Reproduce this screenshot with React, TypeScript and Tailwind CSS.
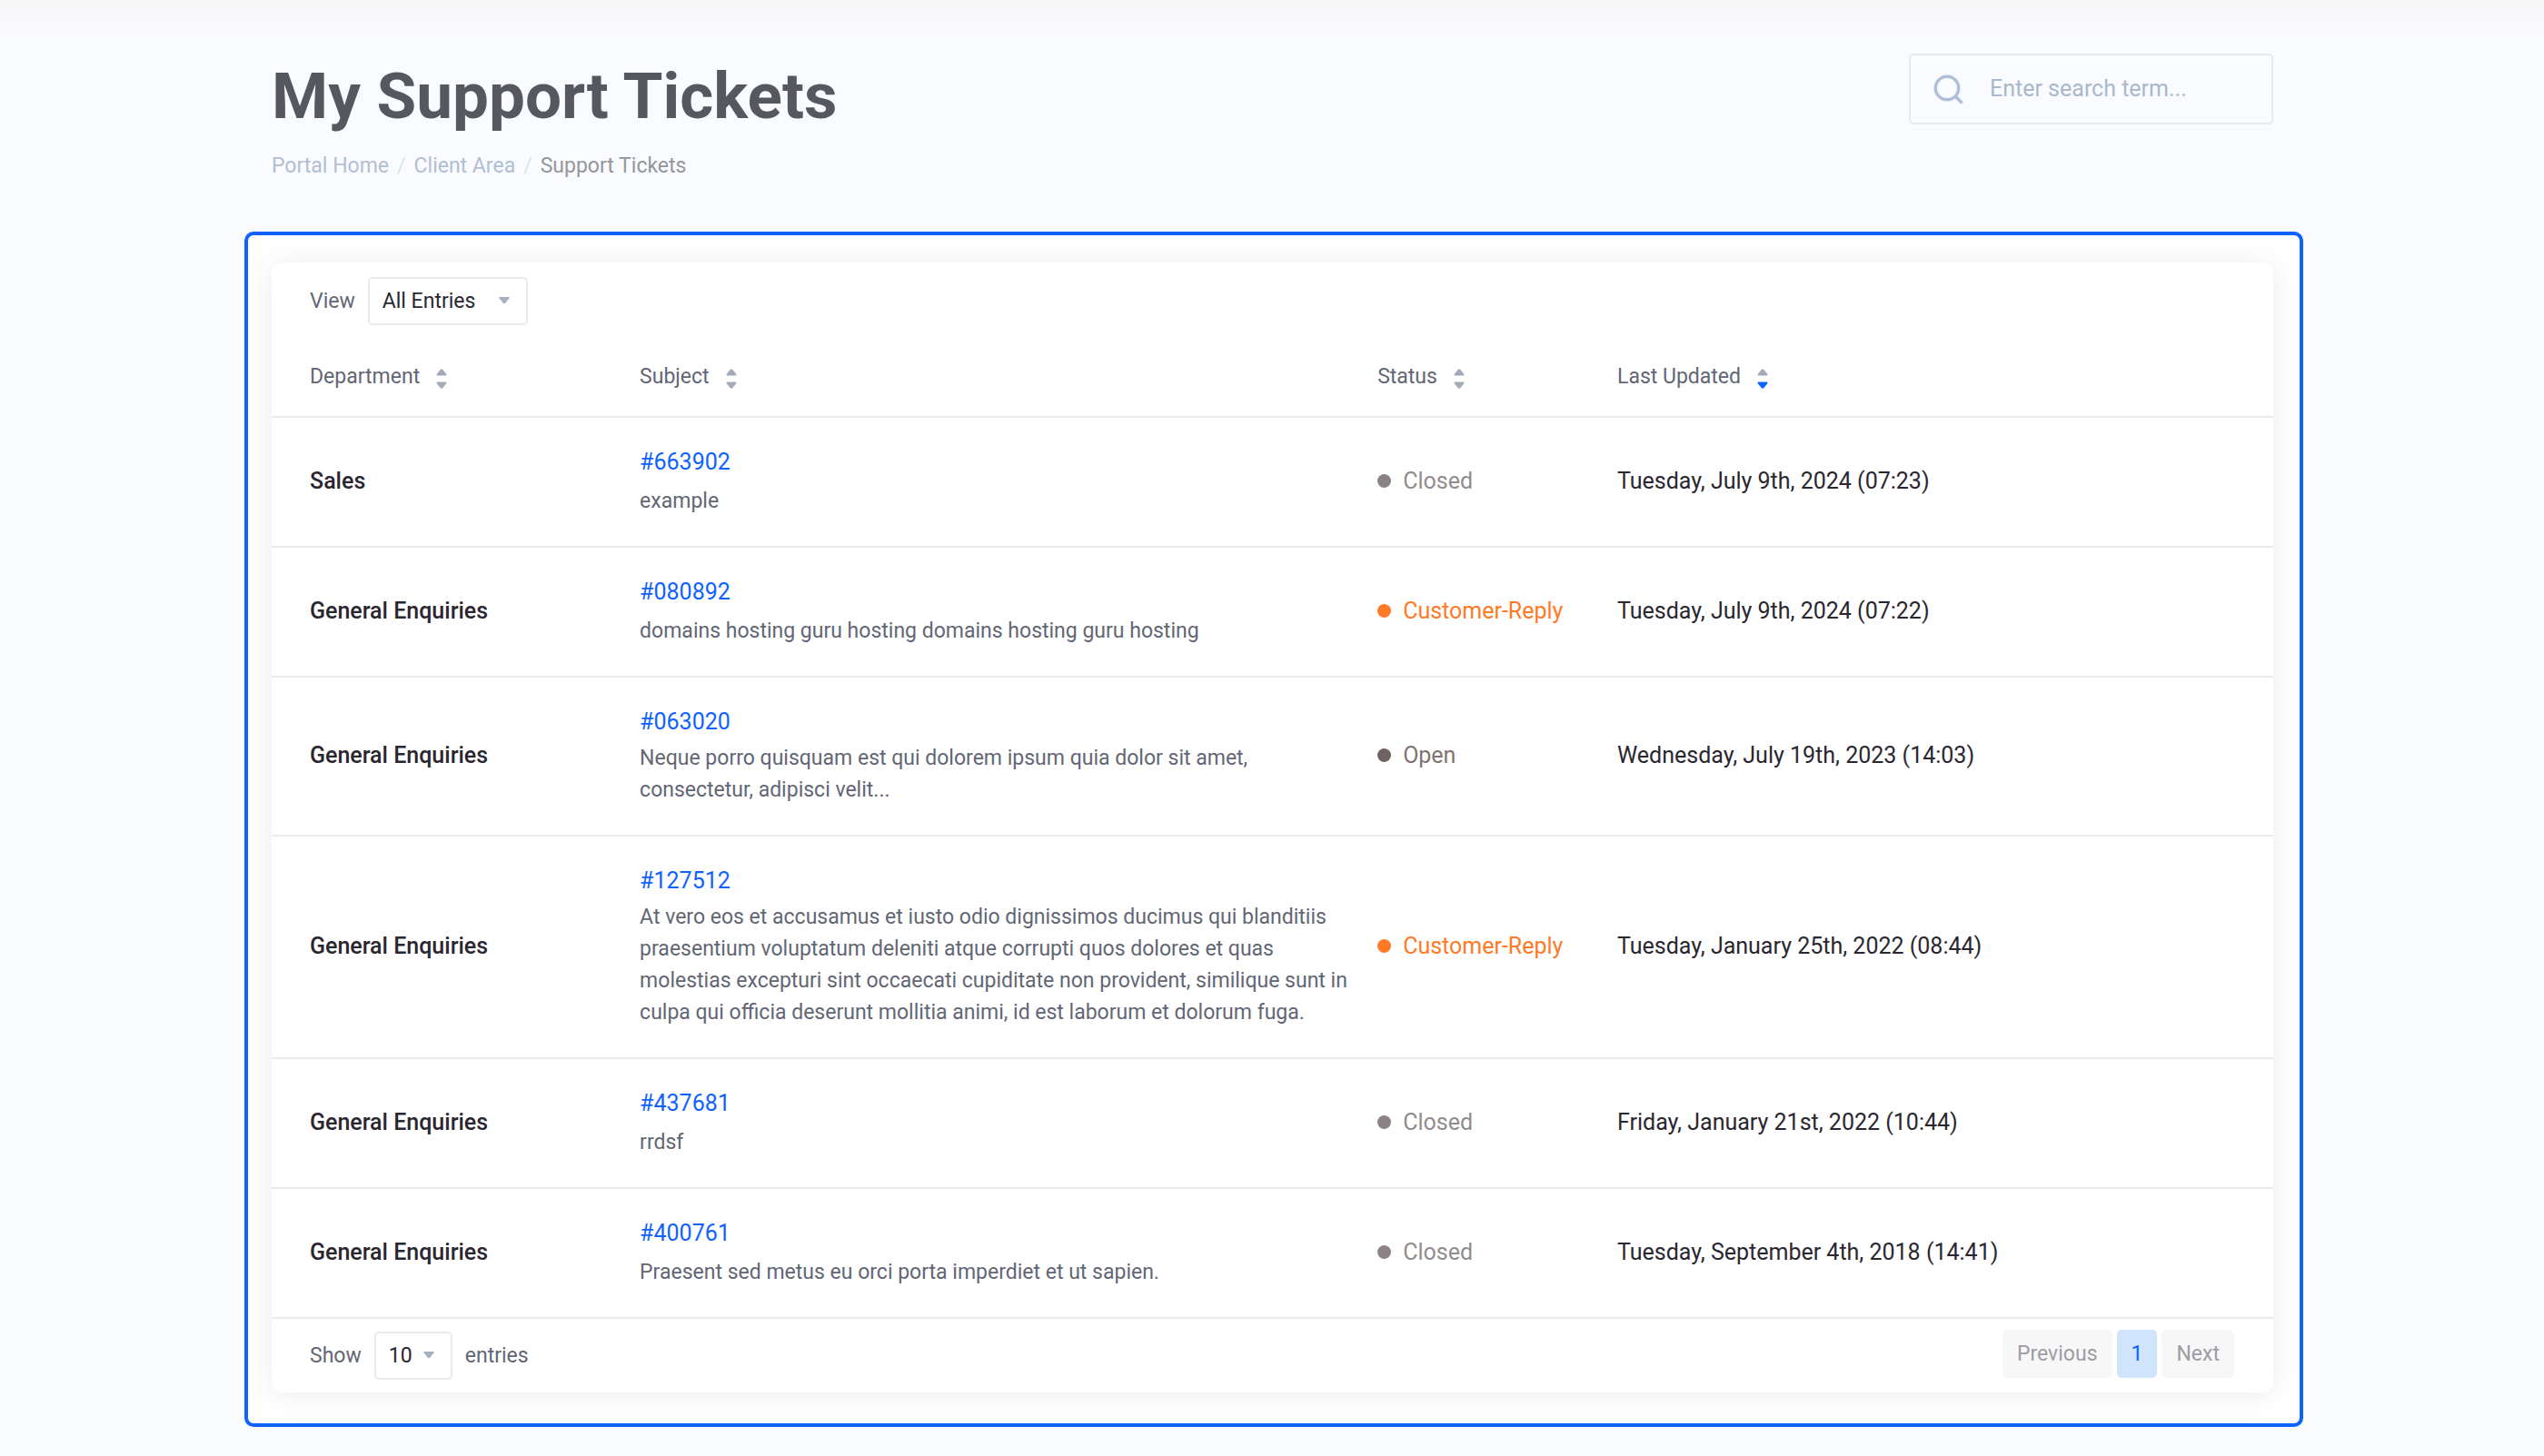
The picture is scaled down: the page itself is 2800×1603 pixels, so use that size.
import React from "react";

type Ticket = {
  department: string;
  id: string;
  subject: string;
  status: "Closed" | "Customer-Reply" | "Open";
  updated: string;
};

const tickets: Ticket[] = [
  { department: "Sales", id: "#663902", subject: "example", status: "Closed", updated: "Tuesday, July 9th, 2024 (07:23)" },
  { department: "General Enquiries", id: "#080892", subject: "domains hosting guru hosting domains hosting guru hosting", status: "Customer-Reply", updated: "Tuesday, July 9th, 2024 (07:22)" },
  { department: "General Enquiries", id: "#063020", subject: "Neque porro quisquam est qui dolorem ipsum quia dolor sit amet, consectetur, adipisci velit...", status: "Open", updated: "Wednesday, July 19th, 2023 (14:03)" },
  { department: "General Enquiries", id: "#127512", subject: "At vero eos et accusamus et iusto odio dignissimos ducimus qui blanditiis praesentium voluptatum deleniti atque corrupti quos dolores et quas molestias excepturi sint occaecati cupiditate non provident, similique sunt in culpa qui officia deserunt mollitia animi, id est laborum et dolorum fuga.", status: "Customer-Reply", updated: "Tuesday, January 25th, 2022 (08:44)" },
  { department: "General Enquiries", id: "#437681", subject: "rrdsf", status: "Closed", updated: "Friday, January 21st, 2022 (10:44)" },
  { department: "General Enquiries", id: "#400761", subject: "Praesent sed metus eu orci porta imperdiet et ut sapien.", status: "Closed", updated: "Tuesday, September 4th, 2018 (14:41)" },
];

const statusText = {
  Closed: "text-[#938c8c]",
  "Customer-Reply": "text-[#ff7a26]",
  Open: "text-[#7f7473]",
};

const statusDot = {
  Closed: "bg-[#8b8285]",
  "Customer-Reply": "bg-[#ff7a26]",
  Open: "bg-[#6f6263]",
};

const columns = [
  { label: "Department", width: "w-[17.3%]", pad: "pl-[42px]", sorted: false },
  { label: "Subject", width: "w-[36.86%]", pad: "pl-6", sorted: false },
  { label: "Status", width: "w-[11.98%]", pad: "pl-6", sorted: false },
  { label: "Last Updated", width: "", pad: "pl-6", sorted: true },
];

function SortIcon({ active }: { active: boolean }) {
  return (
    <svg className="mt-1" width="12" height="22" viewBox="0 0 12 22" aria-hidden="true">
      <path d="M5 .5h2L11.6 6.2 11 7.500H1L.4 6.200z" fill="#a3aab8" />
      <path d="M5 21.500h2l4.600-5.700L11 14.500H1l-.6 1.300z" fill={active ? "#0f62fe" : "#a3aab8"} />
    </svg>
  );
}

function Caret({ className }: { className: string }) {
  return (
    <svg className={className} width="12" height="8" viewBox="0 0 12 8" aria-hidden="true">
      <path d="M.5 0h11l.3 1L7 7H5L.2 1z" fill="#a9b1c0" />
    </svg>
  );
}

export default function App() {
  return (
    <div className="min-h-screen bg-[#fafbff] bg-linear-to-b from-[#f7f7f8] to-[#fafbff] to-[44px] pb-8 pl-[269px] pr-[265px] font-['Roboto',sans-serif] text-[23px] leading-9 text-[#2a2731]">
      <header className="flex items-start justify-between pl-[30px] pr-[33px] pt-[59px]">
        <div>
          <h1 className="text-[71px] font-bold leading-[94px] text-[#56585f]">My Support Tickets</h1>
          <nav aria-label="Breadcrumb" className="mt-3">
            <ol className="flex gap-[9px] leading-9">
              <li><a href="#home" className="text-[#b0bfd3]">Portal Home</a></li>
              <li aria-hidden="true" className="text-[#dfe3ea]">/</li>
              <li><a href="#client" className="text-[#b0bfd3]">Client Area</a></li>
              <li aria-hidden="true" className="text-[#dfe3ea]">/</li>
              <li aria-current="page" className="text-[#94969c]">Support Tickets</li>
            </ol>
          </nav>
        </div>
        <label className="flex h-[78px] w-[401px] items-center rounded-[5px] border-2 border-[#e8eaee] pl-[25px]">
          <svg className="shrink-0" width="33" height="33" viewBox="0 0 33 33" fill="none" stroke="#b0c0d6" strokeWidth="3.500" aria-hidden="true">
            <circle cx="15" cy="15" r="12.700" />
            <path d="M24 24l7.500 7.500" />
          </svg>
          <input
            type="search"
            aria-label="Search tickets"
            placeholder="Enter search term..."
            className="ml-[29px] w-full min-w-0 bg-transparent text-[25px] outline-none placeholder:text-[#a9b8cc]"
          />
        </label>
      </header>

      <main className="mt-[54px] rounded-[10px] border-4 border-[#0f62fe] bg-white pb-[34px] pl-[26px] pr-[29px] pt-[30px]">
        <section className="rounded-[12px] bg-white shadow-[0_2px_32px_rgba(0,0,0,0.08)]">
          <div className="flex items-center pl-[42px] pt-4">
            <label htmlFor="view" className="text-[#626675]">View</label>
            <div className="relative ml-[14px]">
              <select id="view" className="block h-[53px] w-[176px] appearance-none rounded-[5px] border-2 border-[#e8eaed] bg-white pl-[14px]">
                <option>All Entries</option>
              </select>
              <Caret className="pointer-events-none absolute right-5 top-[22px]" />
            </div>
          </div>

          <table className="w-full table-fixed text-left">
            <thead>
              <tr className="h-[101px] border-b-2 border-[#ebebed]">
                {columns.map((c) => (
                  <th key={c.label} scope="col" className={`${c.width} ${c.pad} pt-[14px] font-normal text-[#626675]`} aria-sort={c.sorted ? "descending" : "none"}>
                    <button type="button" className="flex items-center gap-[18px]">
                      {c.label}
                      <SortIcon active={c.sorted} />
                    </button>
                  </th>
                ))}
              </tr>
            </thead>
            <tbody>
              {tickets.map((t) => (
                <tr key={t.id} className="border-b-2 border-[#ebebed] text-[25px]">
                  <td className="pb-[2px] pl-[42px] font-medium">{t.department}</td>
                  <td className="pb-8 pl-6 pt-[31px]">
                    <a href={t.id} className="block text-[#0f62fe]">{t.id}</a>
                    <div className="mt-1 flex min-h-[38px] items-end text-[23px] leading-[35px] text-[#626675]">{t.subject}</div>
                  </td>
                  <td className="pb-[2px] pl-6">
                    <span className={`flex items-center gap-[13px] whitespace-nowrap ${statusText[t.status]}`}>
                      <span className={`size-[15px] shrink-0 rounded-full ${statusDot[t.status]}`} />
                      {t.status}
                    </span>
                  </td>
                  <td className="pb-[2px] pl-6">{t.updated}</td>
                </tr>
              ))}
            </tbody>
          </table>

          <div className="flex h-[81px] items-center justify-between pl-[42px] pr-[43px]">
            <div className="flex items-center text-[#626675]">
              <label htmlFor="count">Show</label>
              <div className="relative ml-[14px]">
                <select id="count" className="block h-[53px] w-[86px] appearance-none rounded-[5px] border-2 border-[#e8eaed] bg-white pl-[14px] text-[#2a2731]">
                  <option>10</option>
                </select>
                <Caret className="pointer-events-none absolute right-5 top-[22px]" />
              </div>
              <span className="ml-[14px]">entries</span>
            </div>
            <nav aria-label="Pagination" className="mb-1 flex gap-[5px]">
              <button type="button" className="h-[53px] rounded-[5px] bg-[#f7f7f8] px-4 text-[#9c9da3]">Previous</button>
              <button type="button" aria-current="page" className="h-[53px] rounded-[5px] bg-[#d0e4fc] px-4 text-[#0f62fe]">1</button>
              <button type="button" className="h-[53px] rounded-[5px] bg-[#f7f7f8] px-4 text-[#9c9da3]">Next</button>
            </nav>
          </div>
        </section>
      </main>
    </div>
  );
}
